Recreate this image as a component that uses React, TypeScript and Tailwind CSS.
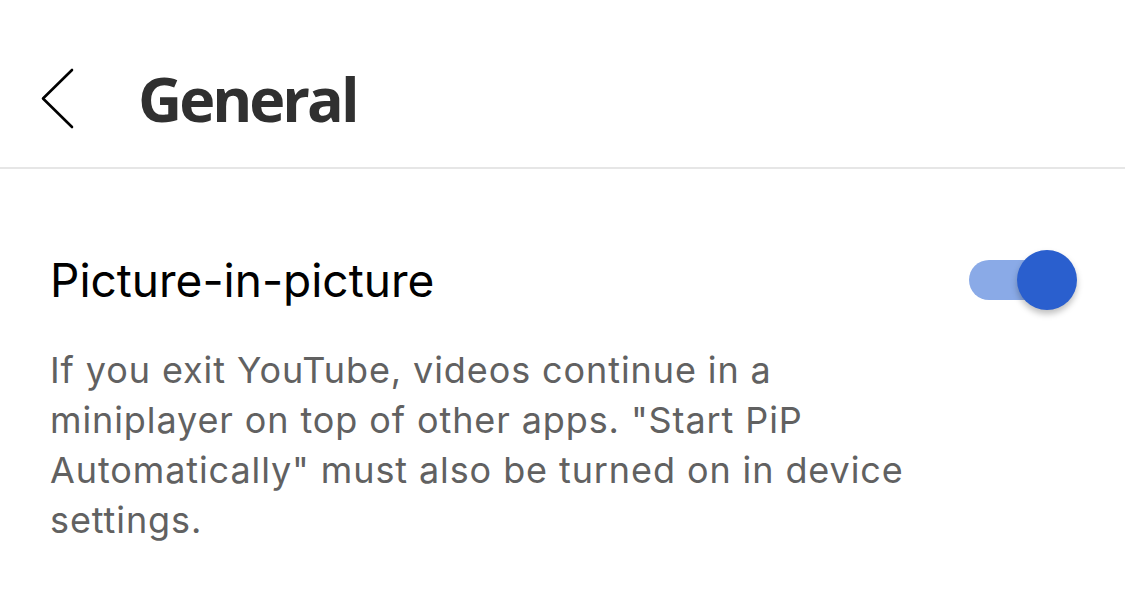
export default function App() {
  return (
    <div className="w-[1125px] h-[605px] bg-white overflow-hidden">
      {/* Header */}
      <div className="h-[169px] flex items-center pt-[30px] border-b-2 border-[#e6e6e6]">
        <button className="ml-[40px] w-[36px] h-[60px] flex items-center justify-center">
          <svg width="36" height="62" viewBox="0 0 36 62" fill="none">
            <path d="M32 2 L3 30.5 L32 59" stroke="#000" strokeWidth="2.6" strokeLinecap="round" strokeLinejoin="round" />
          </svg>
        </button>
        <h1
          className="ml-[62px] text-[61px] font-bold tracking-[-3px] text-[#303030] leading-none"
          style={{ fontFamily: '"Open Sans", "Noto Sans", sans-serif' }}
        >
          General
        </h1>
      </div>

      {/* Setting row */}
      <div className="px-[50px] pt-[80px]" style={{ fontFamily: 'Inter, Roboto, sans-serif' }}>
        <div className="flex items-center justify-between h-[62px]">
          <span className="text-[46px] leading-[56px] text-black">Picture-in-picture</span>
          <div className="relative w-[108px] h-[62px] mr-[-2px] flex items-center">
            <div className="absolute left-0 w-[82px] h-[40px] rounded-full bg-[#8aaae7]" />
            <div className="absolute right-0 w-[60px] h-[60px] rounded-full bg-[#2a5fce] shadow-[0_4px_6px_rgba(0,0,0,0.25)]" />
          </div>
        </div>
        <p className="mt-[34px] text-[36px] leading-[50px] tracking-[0.9px] text-[#616161]">
          <span className="block">If you exit YouTube, videos continue in a</span>
          <span className="block">miniplayer on top of other apps. "Start PiP</span>
          <span className="block">Automatically" must also be turned on in device</span>
          <span className="block">settings.</span>
        </p>
      </div>
    </div>
  )
}
